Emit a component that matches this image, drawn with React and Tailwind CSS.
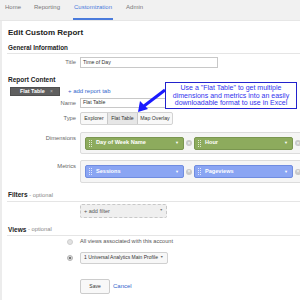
import React from "react";

function Grip() {
  return (
    <div className="grid grid-cols-2 gap-x-[1px] gap-y-[1px] mr-[4px] shrink-0">
      {[0, 1, 2, 3, 4, 5, 6, 7].map((i) => (
        <div key={i} className="w-[1px] h-[1px] bg-white/70" />
      ))}
    </div>
  );
}

function Pill({ label, color }) {
  const cls =
    color === "green"
      ? "bg-[#8dab5d] border-[#7a9650]"
      : "bg-[#8aa5f3] border-[#6f8ce0]";
  return (
    <div className={`flex items-center shrink-0 w-[99px] h-[13px] border rounded-[2px] pl-[3px] pr-[4px] ${cls}`}>
      <Grip />
      <span className="text-white font-bold text-[5.6px] leading-none flex-1 whitespace-nowrap">{label}</span>
      {label ? <span className="text-white text-[4px] leading-none">▼</span> : null}
    </div>
  );
}

function X() {
  return (
    <div className="w-[6px] h-[6px] shrink-0 rounded-full bg-[#c8c8c8] flex items-center justify-center mx-[2px]">
      <span className="text-white text-[5px] leading-none">×</span>
    </div>
  );
}

function Label({ children, className = "" }) {
  return (
    <div className={`w-[74px] shrink-0 text-right text-[#666] text-[5.8px] pr-[0px] mr-[4px] ${className}`}>{children}</div>
  );
}

export default function App() {
  return (
    <div
      className="w-[300px] h-[300px] overflow-hidden bg-white relative"
      style={{ fontFamily: '"Liberation Sans", Arial, sans-serif' }}
    >
      <div className="h-[21px] bg-[#f1f1f1] border-b border-[#e6e6e6] flex items-start text-[6px] text-[#777] pl-[5px]">
        <span className="pt-[3px] mr-[13px]">Home</span>
        <span className="pt-[3px] mr-[13px]">Reporting</span>
        <span className="pt-[3px] px-[1px] h-[20px] border-b-2 border-[#4a7bdc] text-[#4a7bdc] mr-[13px]">Customization</span>
        <span className="pt-[3px]">Admin</span>
      </div>
      <div className="border-l-2 border-[#ececec] h-[279px]">
        <div className="h-[22px] flex items-center ml-[6px] pt-[1px] text-[8px] font-bold text-[#222]">Edit Custom Report</div>
        <div className="h-[11px] flex items-center ml-[5px] pl-[1px] text-[6.3px] font-bold text-[#222] border-b border-[#e5e5e5]">General Information</div>
        <div className="flex items-center mt-[3px] h-[11px]">
          <Label>Title</Label>
          <div className="w-[138px] h-[11px] border border-[#c8c8c8] text-[5.2px] text-[#333] pl-[2px] flex items-center">Time of Day</div>
        </div>
        <div className="h-[14px] mt-[4px] flex items-center ml-[6px] pt-[1px] text-[6.5px] font-bold text-[#222]">Report Content</div>
        <div className="flex items-center mt-[1px] ml-[8px] h-[9px]">
          <div className="w-[50px] h-[9px] bg-[#5f5f5f] border border-[#505050] flex items-center pl-[9px] pr-[6px]">
            <span className="text-white text-[5.4px] font-bold leading-none flex-1">Flat Table</span>
            <span className="text-[#bbb] text-[5px] leading-none">×</span>
          </div>
          <span className="ml-[8px] text-[#3366cc] text-[6px]">+ add report tab</span>
        </div>
        <div className="flex items-center mt-[2px] h-[10px]">
          <Label>Name</Label>
          <div className="w-[138px] h-[10px] border border-[#c8c8c8] text-[5.2px] text-[#333] pl-[2px] flex items-center">Flat Table</div>
        </div>
        <div className="flex items-center mt-[4px] h-[13px]">
          <Label>Type</Label>
          <div className="flex h-[13px] border border-[#d3d3d3] rounded-[2px] bg-[#f8f8f8] text-[5.2px] text-[#333]">
            <div className="w-[26px] flex items-center justify-center">Explorer</div>
            <div className="w-[31px] flex items-center justify-center bg-[#e6e6e6] border-x border-[#c8c8c8]">Flat Table</div>
            <div className="w-[34px] flex items-center justify-center">Map Overlay</div>
          </div>
        </div>
        <div className="flex mt-[7px]">
          <Label className="pt-[2px]">Dimensions</Label>
          <div className="flex items-center h-[22px] w-[240px] shrink-0 border border-[#dcdcdc] rounded-[2px] bg-[#f5f5f5] pl-[4px]">
            <Pill label="Day of Week Name" color="green" />
            <X />
            <Pill label="Hour" color="green" />
            <X />
            <Pill label="" color="green" />
          </div>
        </div>
        <div className="flex mt-[6px]">
          <Label className="pt-[2px]">Metrics</Label>
          <div className="flex items-center h-[23px] w-[240px] shrink-0 border border-[#dcdcdc] rounded-[2px] bg-[#f5f5f5] pl-[4px]">
            <Pill label="Sessions" color="blue" />
            <X />
            <Pill label="Pageviews" color="blue" />
            <X />
          </div>
        </div>
        <div className="mt-[6px] h-[13px] flex items-center ml-[5px] pl-[1px] border-b border-[#e5e5e5]">
          <span className="font-bold text-[#222] text-[6.5px]">Filters</span>
          <span className="text-[#888] text-[5.8px] whitespace-pre"> - optional</span>
        </div>
        <div className="flex items-center mt-[2px] h-[14px]">
          <Label />
          <div className="w-[87px] h-[14px] border border-dashed border-[#c8c8c8] bg-[#efefef] rounded-[2px] flex items-center px-[3px] text-[5.5px] text-[#555]">
            <span className="flex-1">+ add filter</span>
            <span className="text-[3.5px] text-[#777]">▼</span>
          </div>
        </div>
        <div className="mt-[6px] h-[12px] flex items-center ml-[5px] pl-[1px] border-b border-[#e5e5e5]">
          <span className="font-bold text-[#222] text-[6.5px]">Views</span>
          <span className="text-[#888] text-[5.8px] whitespace-pre"> - optional</span>
        </div>
        <div className="flex items-center mt-[1px] h-[9px]">
          <div className="w-[74px] shrink-0 flex justify-end pr-[3px] mr-[4px]">
            <div className="w-[6px] h-[6px] rounded-full bg-[#e2e2e2] border border-[#cfcfcf]" />
          </div>
          <span className="text-[5.6px] text-[#555]">All views associated with this account</span>
        </div>
        <div className="flex items-center mt-[6px] h-[12px]">
          <div className="w-[74px] shrink-0 flex justify-end pr-[3px] mr-[4px]">
            <div className="w-[6px] h-[6px] rounded-full bg-[#d6d6d6] border border-[#b5b5b5] flex items-center justify-center">
              <div className="w-[2px] h-[2px] rounded-full bg-[#555]" />
            </div>
          </div>
          <div className="w-[88px] h-[12px] border border-[#d0d0d0] rounded-[2px] bg-[#f7f7f7] flex items-center pl-[3px] pr-[4px] text-[5px] text-[#333]">
            <span className="flex-1 whitespace-nowrap">1 Universal Analytics Main Profile</span>
            <span className="text-[3.5px] text-[#666] ml-[2px]">▼</span>
          </div>
        </div>
        <div className="flex items-center mt-[15px] ml-[78px]">
          <div className="w-[30px] h-[15px] border border-[#ccc] rounded-[2px] bg-[#f8f8f8] flex items-center justify-center text-[5px] text-[#333]">Save</div>
          <span className="ml-[3px] text-[6px] text-[#3366cc]">Cancel</span>
        </div>
      </div>

      <div className="absolute left-[165px] top-[82px] w-[132px] h-[27px] bg-white border border-[#2222cc] flex items-center justify-center text-center text-[7px] leading-[7.5px] text-[#3333ee]">
        Use a "Flat Table" to get multiple dimensions and metrics into an easily downloadable format to use in Excel
      </div>
      <svg className="absolute left-[130px] top-[86px]" width="36" height="30" viewBox="0 0 36 30">
        <line x1="35" y1="4" x2="14" y2="20" stroke="#1a1aff" strokeWidth="3" />
        <polygon points="8,26 10,15 18,23" fill="#1a1aff" />
      </svg>
    </div>
  );
}
